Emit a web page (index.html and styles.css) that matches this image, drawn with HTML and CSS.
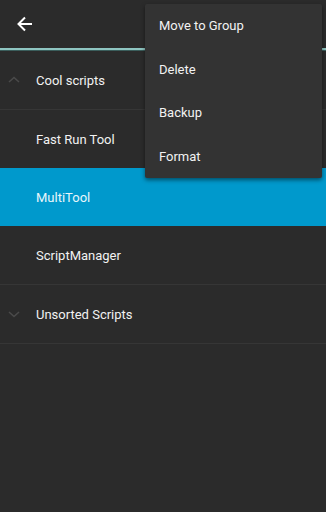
FILE: index.html
```html
<!DOCTYPE html>
<html>
<head>
<meta charset="utf-8">
<link rel="stylesheet" href="styles.css">
</head>
<body>
<div class="screen">
  <header class="toolbar">
    <svg class="back" width="18" height="18" viewBox="0 0 18 18">
      <path d="M16 9H3M9 2.5L2.5 9L9 15.5" fill="none" stroke="#ffffff" stroke-width="2"/>
    </svg>
  </header>
  <div class="accent"></div>
  <div class="list">
    <div class="row group">
      <svg class="chev" width="14" height="10" viewBox="0 0 14 10"><path d="M2 7L7 2.5L12 7" fill="none" stroke="#4a4a4a" stroke-width="1.6"/></svg>
      <span>Cool scripts</span>
    </div>
    <div class="row">
      <span>Fast Run Tool</span>
    </div>
    <div class="row selected">
      <span>MultiTool</span>
    </div>
    <div class="row last">
      <span>ScriptManager</span>
    </div>
    <div class="row group">
      <svg class="chev" width="14" height="10" viewBox="0 0 14 10"><path d="M2 3L7 7.5L12 3" fill="none" stroke="#4a4a4a" stroke-width="1.6"/></svg>
      <span>Unsorted Scripts</span>
    </div>
  </div>
  <div class="menu">
    <div class="item">Move to Group</div>
    <div class="item">Delete</div>
    <div class="item">Backup</div>
    <div class="item">Format</div>
  </div>
</div>
</body>
</html>
```
FILE: styles.css
```css
html, body {
  margin: 0;
  padding: 0;
  background: #2b2b2b;
}
.screen {
  position: relative;
  width: 326px;
  height: 512px;
  background: #2b2b2b;
  font-family: Roboto, "Noto Sans", sans-serif;
  color: #f2f2f2;
  font-size: 13px;
  overflow: hidden;
}
.toolbar {
  height: 48px;
  display: flex;
  align-items: center;
  padding-left: 16px;
}
.back {
  display: block;
}
.accent {
  height: 2px;
  background: #8ec5c1;
  border-bottom: 1px solid #3b5e5c;
}
.row {
  height: 58px;
  display: flex;
  align-items: center;
  padding-left: 36px;
  position: relative;
}
.row.group {
  border-bottom: 1px solid #363636;
}
.row.last {
  border-bottom: 1px solid #363636;
}
.row.selected {
  background: #0099cc;
  color: #e8f6fb;
}
.chev {
  position: absolute;
  left: 7px;
  top: 24px;
}
.menu {
  position: absolute;
  top: 4px;
  left: 145px;
  width: 177px;
  background: #333333;
  box-shadow: 0 2px 4px rgba(0,0,0,0.5);
  border-radius: 2px;
}
.item {
  height: 43.5px;
  display: flex;
  align-items: center;
  padding-left: 14px;
}
```
